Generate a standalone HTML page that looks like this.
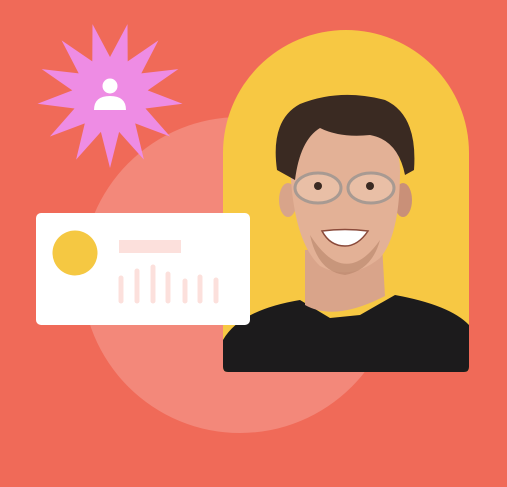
<!DOCTYPE html>
<html><head><style>
html,body{margin:0;padding:0}
body{width:507px;height:487px;background:#F06A58;position:relative;overflow:hidden;font-family:"Liberation Sans",sans-serif}
</style></head><body>
<svg width="507" height="487" viewBox="0 0 507 487" style="position:absolute;left:0;top:0">
  <circle cx="240" cy="275" r="158" fill="#F3887A"/>
  <polygon id="star" fill="#EE8CE4" points=""/>
  <circle cx="110" cy="86" r="7.5" fill="#fff"/>
  <path d="M94 110 Q94 96 110 96 Q126 96 126 110 Z" fill="#fff"/>
  <defs><clipPath id="arch"><path d="M223 153 A123 123 0 0 1 469 153 L469 367 Q469 372 464 372 L228 372 Q223 372 223 367 Z"/></clipPath></defs>
  <path d="M223 153 A123 123 0 0 1 469 153 L469 367 Q469 372 464 372 L228 372 Q223 372 223 367 Z" fill="#F7C843"/>
  <g clip-path="url(#arch)">
    <!-- shirt -->
    <path d="M223 340 Q240 310 300 300 L330 318 L360 315 L395 295 Q450 305 469 325 L469 372 L223 372 Z" fill="#1c1b1c"/>
    <!-- neck -->
    <path d="M305 250 L305 305 Q335 322 385 296 L382 245 Z" fill="#d9a48a"/>
    <!-- ears -->
    <ellipse cx="288" cy="200" rx="9" ry="17" fill="#d8a48a"/>
    <ellipse cx="403" cy="200" rx="9" ry="17" fill="#c99078"/>
    <!-- face -->
    <path d="M290 160 Q290 120 345 122 Q400 124 400 170 Q400 235 380 258 Q350 282 320 266 Q292 240 290 160 Z" fill="#e3b196"/>
    <path d="M310 235 Q345 290 380 240 Q372 270 345 275 Q318 272 310 235Z" fill="#b68469" opacity=".6"/>
    <!-- hair -->
    <path d="M277 170 Q270 120 300 104 Q340 88 385 100 Q418 115 414 170 L405 175 Q398 140 370 135 Q340 138 320 128 Q300 140 295 180 Z" fill="#3a2a22"/>
    <!-- glasses -->
    <ellipse cx="318" cy="188" rx="23" ry="15" fill="#e9bfa6" stroke="#a89a92" stroke-width="3"/>
    <ellipse cx="371" cy="188" rx="23" ry="15" fill="#e9bfa6" stroke="#a89a92" stroke-width="3"/>
    <circle cx="318" cy="186" r="4" fill="#3a2a22"/><circle cx="370" cy="186" r="4" fill="#3a2a22"/>
    <!-- smile -->
    <path d="M322 231 Q345 228 368 231 Q358 246 345 246 Q330 246 322 231 Z" fill="#fff" stroke="#8a4a3a" stroke-width="1.5"/>
  </g>
  <!-- card -->
  <rect x="36" y="213" width="214" height="112" rx="5" fill="#fff"/>
  <circle cx="75" cy="253" r="22.5" fill="#F5C842"/>
  <rect x="119" y="240" width="62" height="13" fill="#FCE0DC"/>
  <g stroke="#FCE0DC" stroke-width="5" stroke-linecap="round">
    <line x1="121" y1="278" x2="121" y2="301"/>
    <line x1="137" y1="271" x2="137" y2="301"/>
    <line x1="153" y1="267" x2="153" y2="301"/>
    <line x1="168" y1="274" x2="168" y2="301"/>
    <line x1="185" y1="281" x2="185" y2="301"/>
    <line x1="200" y1="277" x2="200" y2="301"/>
    <line x1="216" y1="280" x2="216" y2="301"/>
  </g>
</svg>
<script>
var p=[],n=13,cx=110,cy=95,R=73,r=38;
for(var k=0;k<2*n;k++){var t=k*Math.PI/n,rr=k%2?r:R;p.push((cx+rr*Math.sin(t)).toFixed(1)+","+(cy+rr*Math.cos(t)).toFixed(1));}
document.getElementById("star").setAttribute("points",p.join(" "));
</script>
</body></html>
